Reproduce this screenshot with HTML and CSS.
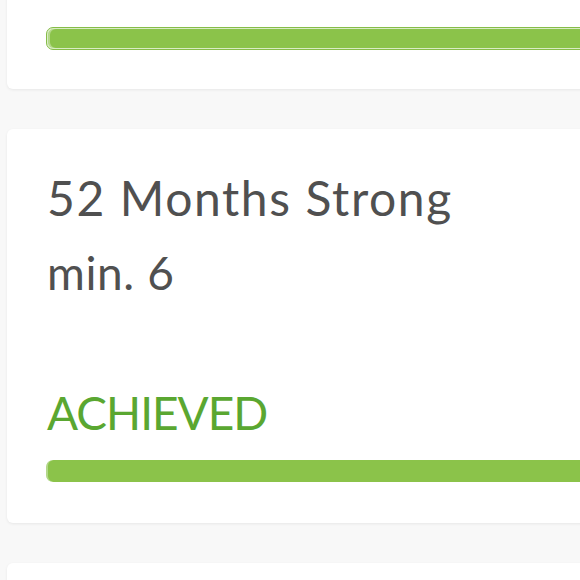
FILE: index.html
```html
<!DOCTYPE html>
<html lang="en">
  <head>
    <meta charset="UTF-8" />
    <meta name="viewport" content="width=device-width, initial-scale=1.0" />
    <link rel="stylesheet" href="styles.css">
    <title>Milestones</title>
  </head>
  <body>
    <div class="feed">
      <div class="card card-top">
        <div class="bar bar-outlined"><div class="fill" style="width: 100%"></div></div>
      </div>

      <div class="card">
        <h2 class="title">52 Months Strong</h2>
        <p class="goal">min. 6</p>
        <p class="status">ACHIEVED</p>
        <div class="bar"><div class="fill" style="width: 100%"></div></div>
      </div>

      <div class="card"></div>
    </div>
  </body>
</html>
```

FILE: styles.css
```css
* {
  margin: 0;
  padding: 0;
  box-sizing: border-box;
}
html,
body {
  height: 100%;
  overflow: hidden;
}
body {
  background-color: #f8f8f8;
  font-family: Lato, "Liberation Sans", sans-serif;
  color: #505050;
}
.feed {
  display: flex;
  flex-direction: column;
  gap: 40px;
  width: 640px;
  margin-top: -13px;
  margin-left: 7px;
}
.card {
  background-color: #fff;
  border-radius: 6px;
  box-shadow: 0 1px 3px rgba(0, 0, 0, 0.07);
  padding: 40px 39px 41px;
  display: flex;
  flex-direction: column;
  min-height: 120px;
}
.card-top {
  min-height: 0;
  padding-bottom: 39px;
}
.title {
  font-size: 48px;
  font-weight: 400;
  line-height: 57px;
  letter-spacing: 1.6px;
  margin-left: 1px;
}
.goal {
  font-size: 46px;
  line-height: 55px;
  letter-spacing: 0.6px;
  margin-top: 19px;
  margin-left: 1px;
}
.status {
  font-size: 46px;
  line-height: 55px;
  letter-spacing: -1px;
  margin-top: 85px;
  margin-left: 1px;
  color: #5aa731;
}
.bar {
  height: 22px;
  border-radius: 7px;
  background-color: #eef5e6;
  overflow: hidden;
  margin-top: 20px;
}
.bar-outlined {
  height: 23px;
  margin-top: 0;
  border: 1px solid #86bd48;
  padding: 1px;
  background-color: #d9ecc4;
}
.fill {
  height: 100%;
  border-radius: 6px;
  background-color: #8bc34a;
  box-shadow: inset 2px 0 0 rgba(255, 255, 255, 0.35);
}
```
